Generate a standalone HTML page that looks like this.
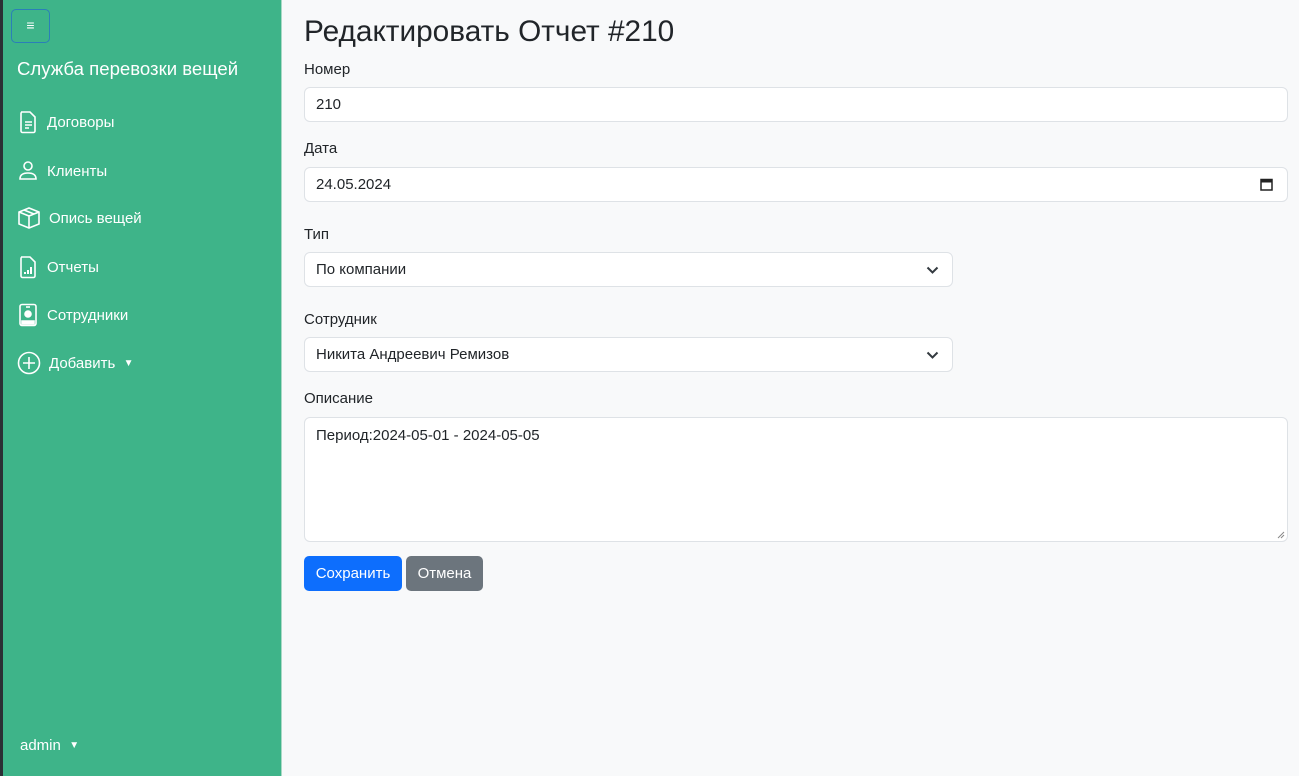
<!DOCTYPE html>
<html><head><meta charset="utf-8"><style>
*{box-sizing:border-box;margin:0;padding:0}
body{width:1299px;height:776px;font-family:"Liberation Sans",sans-serif;background:#f8f9fa;color:#212529;position:relative;overflow:hidden}
.strip{position:absolute;left:0;top:0;width:3px;height:776px;background:#2b3035}
.side{position:absolute;left:3px;top:0;width:279px;height:776px;background:#3eb489;color:#fff;border-right:1px solid #a9d9c5}
.tog{position:absolute;left:8px;top:9px;width:39px;height:34px;border:1px solid #2a7fb8;border-radius:5px;color:#fff;text-align:center;line-height:31px;font-size:14px}
.brand{position:absolute;left:14px;top:58px;font-size:18.6px}
.nav{position:absolute;left:14px;font-size:15px;display:flex;align-items:center}
.nav svg{margin-right:8px}
.main{position:absolute;left:304px;top:0;width:984px}
h1{position:absolute;top:15px;font-size:29.8px;font-weight:400}
label{position:absolute;font-size:15px}
.in{position:absolute;background:#fff;border:1px solid #dee2e6;border-radius:6px;font-size:15px;padding-left:11px;display:flex;align-items:center}
.btn{position:absolute;top:556px;height:35px;border-radius:5px;color:#fff;font-size:15px;line-height:35px;text-align:center}
</style></head><body>
<div class="strip"></div>
<div class="side">
<div class="tog">≡</div>
<div class="brand">Служба перевозки вещей</div>
<div class="nav" style="top:110px"><svg width="22" height="24" viewBox="0 0 22 24" fill="none" stroke="#fff" stroke-width="1.6"><path d="M4 2h9l5 5v14a1.5 1.5 0 0 1-1.5 1.5h-11A1.5 1.5 0 0 1 4 21V3.5A1.5 1.5 0 0 1 5.5 2"/><path d="M8 12h7M8 15h7M8 18h4"/></svg>Договоры</div>
<div class="nav" style="top:160px"><svg width="22" height="22" viewBox="0 0 22 22" fill="none" stroke="#fff" stroke-width="1.6"><circle cx="11" cy="6" r="4"/><path d="M3 19c0-4 3-6 8-6s8 2 8 6z"/></svg>Клиенты</div>
<div class="nav" style="top:206px"><svg width="24" height="24" viewBox="0 0 24 24" fill="none" stroke="#fff" stroke-width="1.6"><path d="M12 2l10 4v12l-10 4-10-4V6z"/><path d="M2 6l10 4 10-4M12 10v12M7 4l10 4"/></svg>Опись вещей</div>
<div class="nav" style="top:255px"><svg width="22" height="24" viewBox="0 0 22 24" fill="none" stroke="#fff" stroke-width="1.6"><path d="M4 2h9l5 5v14a1.5 1.5 0 0 1-1.5 1.5h-11A1.5 1.5 0 0 1 4 21V3.5A1.5 1.5 0 0 1 5.5 2"/><path d="M8 19v-2M11 19v-4M14 19v-7" stroke-width="2"/></svg>Отчеты</div>
<div class="nav" style="top:303px"><svg width="22" height="24" viewBox="0 0 22 24" fill="none" stroke="#fff" stroke-width="1.6"><rect x="3" y="1.5" width="16" height="21" rx="2"/><circle cx="11" cy="11" r="3" fill="#fff"/><path d="M5 18h12v3H5z" fill="#fff"/><path d="M9 4h4"/></svg>Сотрудники</div>
<div class="nav" style="top:351px"><svg width="24" height="24" viewBox="0 0 24 24" fill="none" stroke="#fff" stroke-width="1.6"><circle cx="12" cy="12" r="10.5"/><path d="M12 6v12M6 12h12"/></svg>Добавить&nbsp;&nbsp;<span style="font-size:10px">▼</span></div>
<div class="nav" style="top:737px;left:17px">admin&nbsp;&nbsp;<span style="font-size:10px">▼</span></div>
</div>
<div class="main">
<h1>Редактировать Отчет #210</h1>
<label style="top:61px">Номер</label>
<div class="in" style="top:87px;height:35px;width:984px">210</div>
<label style="top:140px">Дата</label>
<div class="in" style="top:167px;height:35px;width:984px">24.05.2024<svg style="position:absolute;right:14px" width="13" height="13" viewBox="0 0 13 13"><rect x="1" y="1.5" width="11" height="10.5" fill="none" stroke="#222" stroke-width="1.5"/><rect x="1" y="1.5" width="11" height="3" fill="#222"/></svg></div>
<label style="top:226px">Тип</label>
<div class="in" style="top:252px;height:35px;width:649px">По компании<svg style="position:absolute;right:13px" width="13" height="10" viewBox="0 0 13 10"><path d="M1.5 2.5l5 5 5-5" fill="none" stroke="#343a40" stroke-width="2"/></svg></div>
<label style="top:311px">Сотрудник</label>
<div class="in" style="top:337px;height:35px;width:649px">Никита Андреевич Ремизов<svg style="position:absolute;right:13px" width="13" height="10" viewBox="0 0 13 10"><path d="M1.5 2.5l5 5 5-5" fill="none" stroke="#343a40" stroke-width="2"/></svg></div>
<label style="top:390px">Описание</label>
<div class="in" style="top:417px;height:125px;width:984px;align-items:flex-start;padding-top:9px">Период:2024-05-01 - 2024-05-05<svg style="position:absolute;right:2px;bottom:2px" width="8" height="8" viewBox="0 0 8 8"><path d="M7 1L1 7M7 4L4 7" stroke="#888" stroke-width="1"/></svg></div>
<div class="btn" style="left:0;width:98px;background:#0d6efd">Сохранить</div>
<div class="btn" style="left:102px;width:77px;background:#6c757d">Отмена</div>
</div>
</body></html>
